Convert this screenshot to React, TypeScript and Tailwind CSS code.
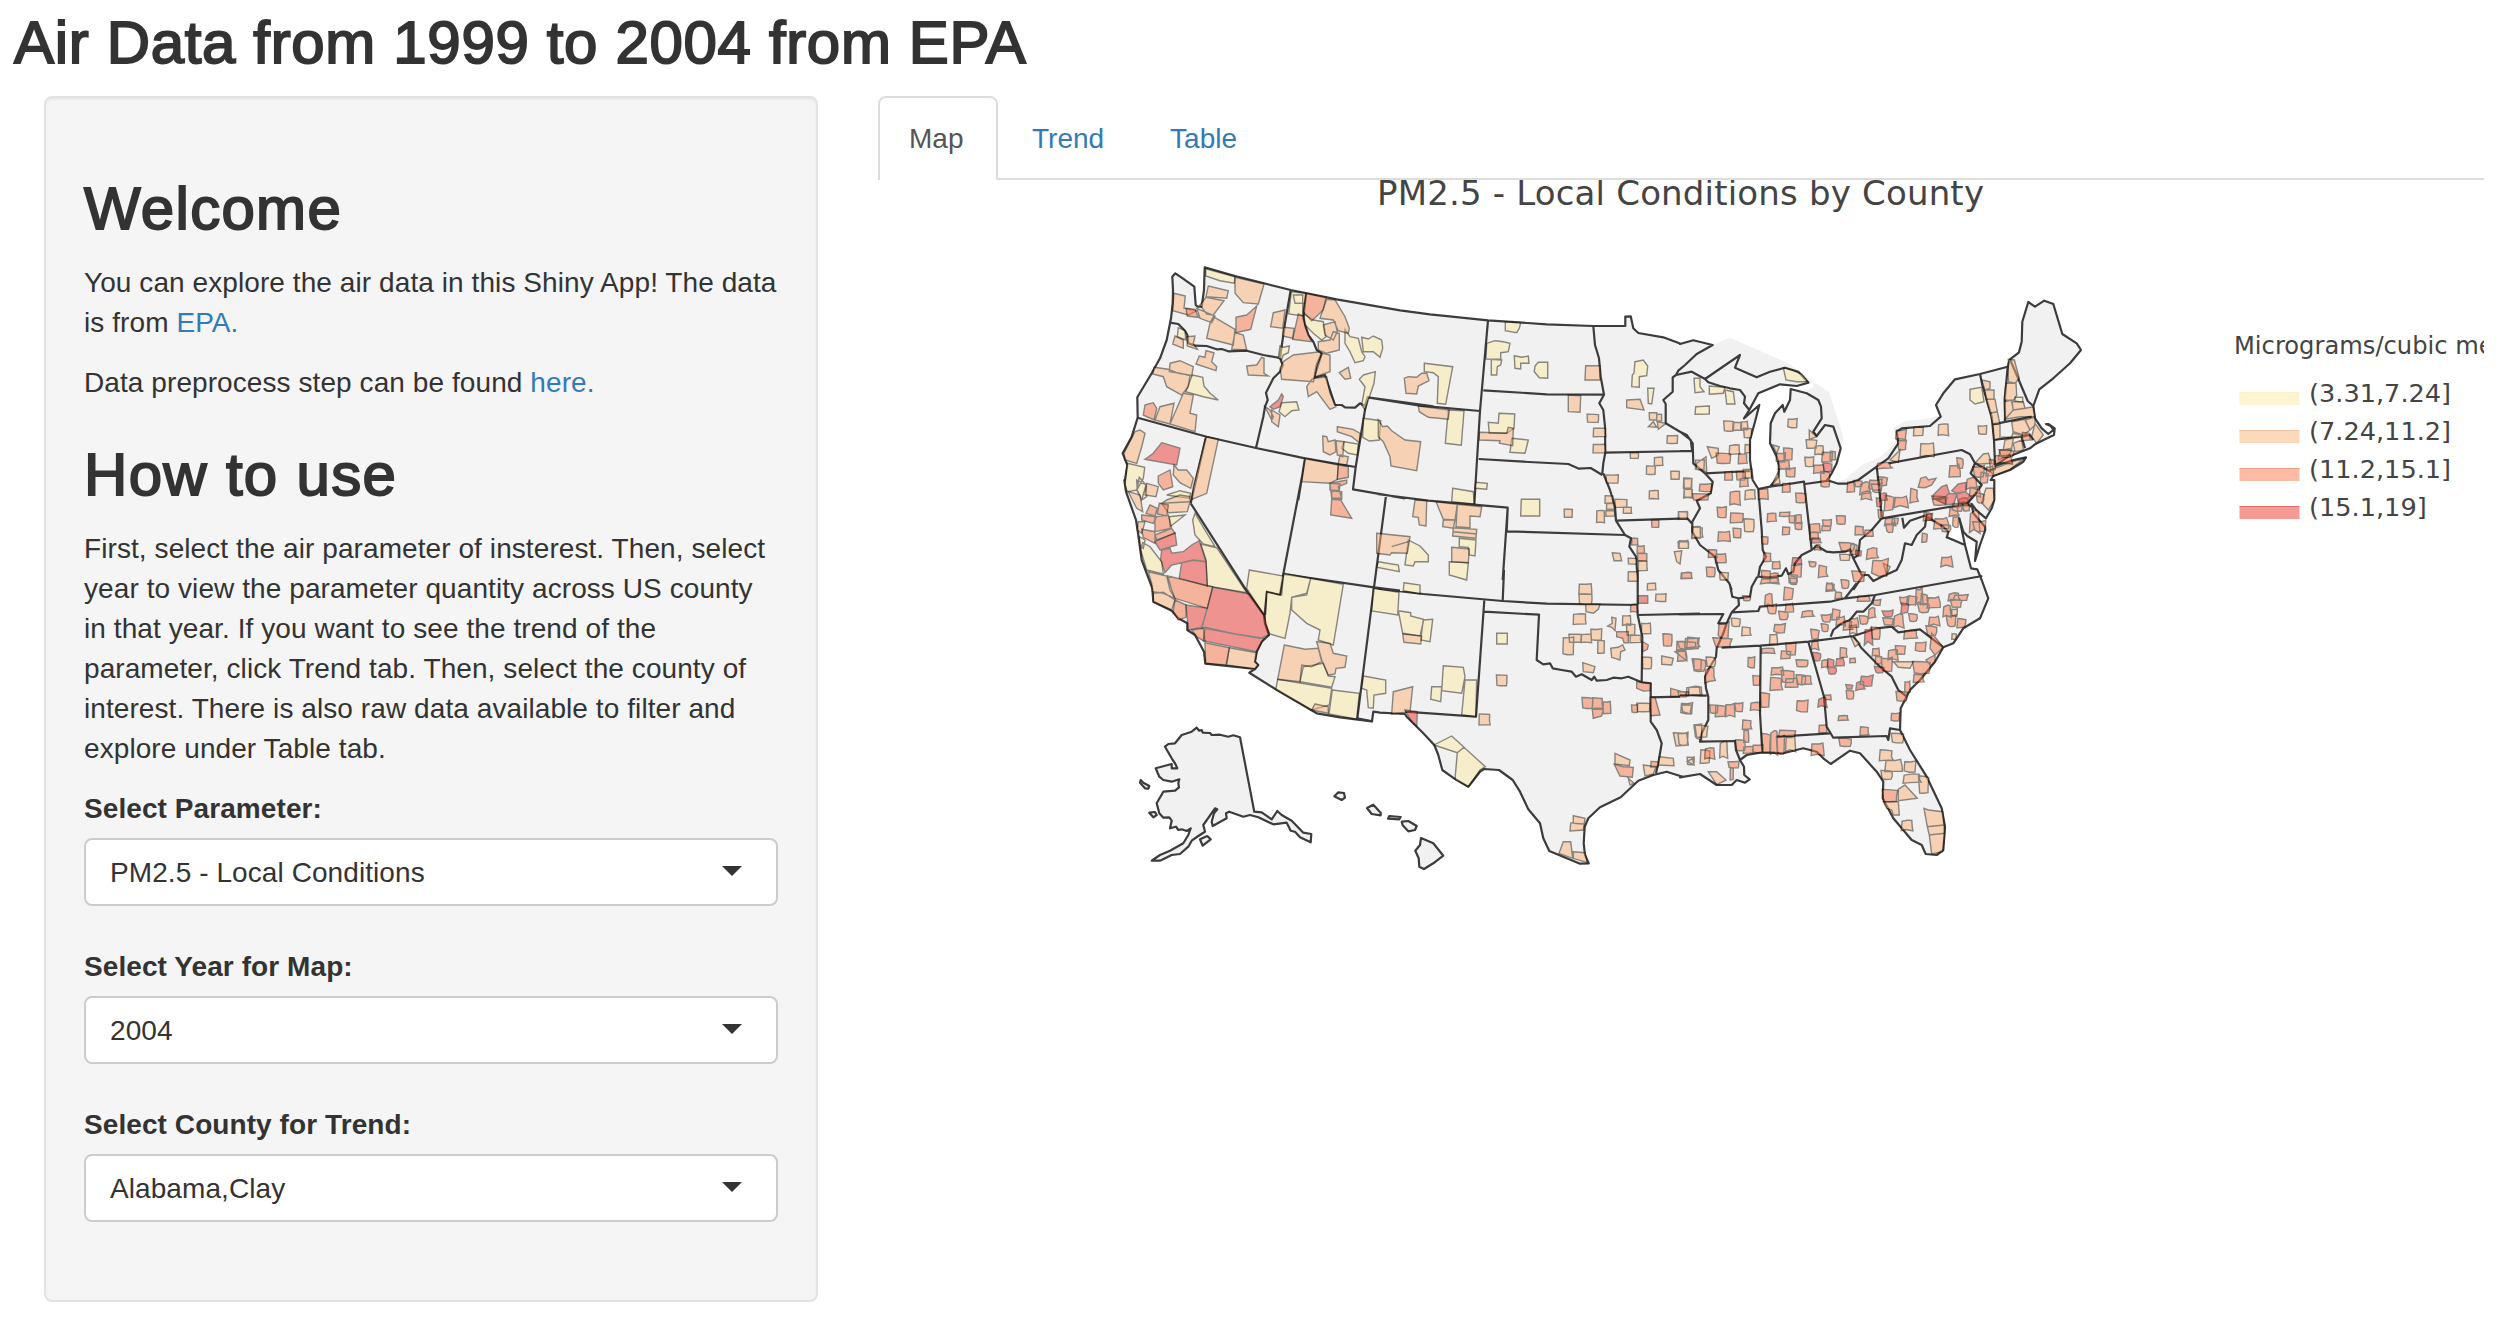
import React from "react";

type Frame = [number, number];

const A: Frame = [1100, 240];
const B: Frame = [1100, 480];
const C: Frame = [1380, 260];
const D: Frame = [1380, 570];
const E: Frame = [1680, 300];
const F: Frame = [1680, 580];
const G: Frame = [1120, 700];

// Each map tile stores coordinates at three times the drawing scale.
function points(frame: Frame, text: string): string {
  return text
    .trim()
    .split(/\s+/)
    .map((p) => {
      const [x, y] = p.split(",").map(Number);
      return `${(frame[0] + x / 3).toFixed(1)},${(frame[1] + y / 3).toFixed(1)}`;
    })
    .join(" ");
}

function shapes(frame: Frame, text: string, close: boolean): string {
  return text
    .split(";")
    .filter((s) => s.trim())
    .map((s) => `M${points(frame, s)}${close ? "Z" : ""}`)
    .join("");
}

// Small counties: x y width height, with corners nudged so they read as irregular outlines.
function blocks(frame: Frame, text: string, rough: number): string {
  return text
    .split(";")
    .filter((s) => s.trim())
    .map((s, i) => {
      const [x, y, w, h] = s.trim().split(/\s+/).map(Number);
      const j = (k: number) => ((((i * 7 + k * 13) % 11) - 5) / 5) * rough;
      const pts = [
        [x + w * j(1), y + h * j(2)],
        [x + w * 0.6, y + h * j(3) * 0.7],
        [x + w + w * j(4), y + h * j(5)],
        [x + w - w * j(6) * 0.7, y + h * 0.6],
        [x + w + w * j(7), y + h + h * j(8)],
        [x + w * 0.4, y + h + h * j(9) * 0.8],
        [x + w * j(10), y + h - h * j(4)],
      ];
      return `M${points(frame, pts.map((p) => p.join(",")).join(" "))}Z`;
    })
    .join("");
}

const land = [
  points(A, "217,110 226,100 248,115 283,140 287,195 293,200 305,200 312,150 314,82 405,108 492,130 572,150 710,178 900,211"),
  points(C, "150,163 324,181 500,193 640,198 736,198 736,170 752,169 760,205 775,219 850,232 902,251"),
  points(E, "0,132 40,121 98,135 150,113 325,190 400,245 447,275 490,410 485,455 447,540 475,545 500,535 545,495 600,472 640,435 655,415 640,385 670,365 750,355 782,345 768,315 790,280 825,238 900,222 983,200 990,178 1017,157 1025,125 1027,65 1045,6 1065,20 1093,2 1120,12 1147,102 1190,130 1203,150 1170,190 1120,235 1078,268 1060,318 1065,355 1085,385 1105,402 1120,390 1098,372 1124,385 1122,405 1095,418 1065,433 1050,445 985,470 955,490 945,498 1000,480 1038,472 1030,485 990,510 940,528 943,540 943,600 918,655 875,612 880,640 915,680 916,690 900,735 885,783 890,725 862,708 850,695 838,655 810,680 800,715 855,735 873,805 892,808 905,840"),
  points(F, "925,55 900,115 850,145 820,190 790,202 765,245 720,300 690,330 662,385 660,450 690,510 740,590 785,685 795,740 790,810 770,825 737,822 725,795 695,780 640,715 608,655 610,605 590,575 540,520 510,512 452,552 430,535 410,515 370,505 310,520 245,517 200,525 180,540 192,560 193,585 209,598 195,608 170,600 155,615 110,615 60,582 0,592"),
  points(D, "910,621 860,605 820,615 775,632 722,682 660,712 625,745 614,770 611,820 615,855 626,880 600,881 508,843 490,805 480,760 445,718 420,665 398,630 357,600 312,597 300,605 265,650 222,625 187,600 175,555 163,525 130,490 80,440 75,432 0,428"),
  points(B, "820,695 816,724 720,712 650,700 527,628 448,578 465,567 316,551 312,515 285,465 262,450 262,430 235,415 215,392 160,365 157,325 125,240 115,165 108,120 78,35 73,0"),
  points(A, "75,720 82,675 68,640 95,590 113,533 112,472 155,400 180,355 200,300 213,235 218,190 219,150"),
].join(" ");

const coast = [
  "M" + [
    points(E, "447,542 475,551 500,551 535,540 590,500 625,475 655,430 650,395 665,385 750,378 782,350 768,315 790,280 825,238 900,222 983,200 990,178 1017,157 1025,125 1027,65 1045,6 1065,20 1093,2 1120,12 1147,102 1190,130 1203,150 1170,190 1120,235 1078,268 1060,318 1065,355 1085,385 1105,402 1120,390 1112,378 1098,372 1105,372 1124,385 1122,405 1095,418 1065,433 1050,445 985,470 955,490 945,498 1000,480 1038,472 1030,485 990,510 940,528 932,540 943,540 943,600 935,625 918,655 890,632 875,612 880,640 915,680 916,690 900,735 885,783 890,725 862,708 850,695 838,655 855,735 815,718 800,712 855,735 873,805 892,808 905,840"),
    points(F, "925,55 900,115 850,145 820,190 790,202 765,245 720,300 690,330 662,385 660,450 690,510 740,590 785,685 795,740 790,810 770,825 737,822 725,795 695,780 640,715 608,655 610,605 590,575 540,520 510,512 452,552 430,535 410,515 370,505 310,520 245,517 200,525 180,540 192,560 193,585 209,598 195,608 170,600 155,615 110,615 60,582 0,592"),
    points(D, "910,621 860,605 820,615 775,632 722,682 660,712 625,745 614,770 611,820 615,855 626,880 600,881 508,843 490,805 480,760 445,718 420,665 398,630 357,600 312,597 300,605 265,650 222,625 187,600 175,555 163,525 130,490 80,440 75,432 0,428"),
    points(B, "820,695 816,724 720,712 650,700 527,628 448,578 465,567 316,551 312,515 285,465 262,450 262,430 235,415 215,392 160,365 157,325 125,240 115,165 108,120 78,35 73,0"),
    points(A, "75,720 82,675 68,640 95,590 113,533 112,472 155,400 180,355 200,300 213,235 218,190 219,150 217,110 226,100 248,115 283,140 287,195 293,200 305,200 312,150 314,82 405,108 492,130 572,150 710,178 900,211"),
    points(C, "150,163 324,181 500,193 640,198 736,198 736,170 752,169 760,205 775,219 850,232 902,251"),
    points(E, "0,132 40,121 98,135 50,162 15,195 -5,212"),
    points(C, "888,345"),
  ].join(" "),
].join("");

const borders = [
  shapes(A, "210,248 235,252 255,272 262,285 265,310 285,317 320,318 350,328 365,327 385,334 440,332 490,345 540,354;572,150 555,250 540,354 548,375 540,395 520,415 498,458 503,480 495,500 490,530 468,624;113,533 320,590 468,624 615,655 767,681;318,590 272,790;618,158 610,235 625,285 640,305 650,330 665,340 650,375 643,413 675,405 690,450 705,495 725,495 735,502 765,503 780,490 795,498 803,472;1000,499 803,472 795,510 767,681 759,748 915,775;615,655 595,780", false),
  shapes(B, "272,70 445,340 492,405 495,430 507,465 485,485 470,515 465,545 475,555 465,567;858,47 822,322;605,-5 550,282 822,322 900,332;822,322 772,715 816,724;550,282 540,345 520,340 500,335 495,405", false),
  shapes(C, "324,181 300,453;-37,412 120,437 300,453;300,453 283,732;296,597 430,605 565,612 597,626 632,624 667,645;310,391 500,403 670,404;640,198 645,255 657,295 662,350 672,404 658,430 670,450 675,500 676,578 670,610 667,640;-10,702 145,722 383,743 380,814 735,825;383,743 368,960;670,640 690,690 705,740 708,782 735,825 753,835 748,860 768,890 773,960;672,578 936,573;708,782 922,775 935,790;888,345 878,352 878,395 850,420 857,432 857,490 900,515 932,540 937,575;888,345 935,335 975,357", false),
  shapes(E, "0,453 38,453;0,395 20,405 38,430 40,490 75,520 98,545 92,580 50,602 60,625 37,665 37,695 60,735 105,770 115,810 148,850 155,870;75,520 213,513;75,237 85,247 120,258 150,265 180,270 195,290 192,310 208,330;75,237 180,165 165,203 230,232 270,215 315,203 355,215 385,248 350,258 300,253 235,280 208,330 192,355 238,315 225,365 210,420 210,480 218,540 235,567 270,560 295,530 298,500 290,470 270,430 272,370 285,340 308,315 313,335 330,300 332,267 380,280 415,300 423,320 425,355 400,395 410,408 435,375 460,380 482,445 470,490 455,520 440,542;270,560 372,545 395,750;375,552 447,542;235,567 245,690 248,750 258,770 240,800 235,830 270,832 305,827 318,805 325,822 340,815 345,790 365,765 395,750 410,737 440,755 460,757 495,755 510,748 520,775 535,765 540,720 575,690 605,655 860,612;590,500 600,590 605,655;625,490 845,450 870,463 885,490 872,520 905,555 880,590 860,612 875,620;885,490 932,515;900,222 907,255 935,350 942,420 945,495;942,420 1050,405 1060,420;938,373 1055,350;990,178 1043,303 1060,318;983,200 975,290 975,365;1025,410 1035,445;667,653 672,683 690,662 740,645 735,680 710,705 695,735 675,730 665,780 650,810 610,828 580,843 565,825 545,825 530,795 520,775;740,650 765,665 790,680 805,695 800,715;550,825 520,870", false),
  shapes(F, "907,-12 585,45 495,55 450,65 240,80 235,93 155,97;585,45 575,70 550,95 530,95 510,120 485,130 460,150 452,170;125,203 240,197 385,185 520,168;520,168 560,155 590,145 635,140 655,157 720,148 790,202;520,168 545,205 600,260 635,290 655,330 680,350;385,185 432,350 440,440 460,473 620,468 625,480 630,445 660,450;290,470 450,460;242,197 240,400 247,517;155,97 140,130 130,160 110,205 108,230 90,260 75,290 78,325 85,350 85,420 65,460 60,485 165,483 168,510 180,540;0,345 80,347;-2,103 130,102 115,130 140,130;150,15 157,50 175,55 177,75 155,97;175,55 210,50 215,20 232,-10;530,10 495,55", false),
  shapes(D, "-20,52 0,57 130,72 368,93 500,101 772,105;313,92 288,440 75,425;313,125 477,134 470,270 490,283 510,280 518,295 545,300 575,305 588,320 605,313 635,330 643,320 650,332 680,330 700,323 725,325 745,320 785,337;772,105 773,135 787,200 785,337 812,340 812,455 830,480 845,520 835,580 828,610;773,135 960,131;372,0 368,93;773,0 773,105;812,382 900,380", false),
].join("");

const yellow = [
  shapes(A, "317,86 405,110 403,130 360,122 317,108;574,155 619,160 615,190 585,190 580,165 608,165 608,228 566,222;235,263 255,272 257,300 232,290;277,405 308,412 312,438 330,460 355,480 310,470 257,455;535,355 540,318 550,322 568,318 565,338 550,345 545,358;612,222 640,240 670,245 678,290 665,300 640,280 615,255;735,268 750,290 775,295 785,335 795,350 790,362 765,368 750,335 735,310;785,292 805,297 820,288 845,300 848,325 840,352 820,335 790,335;790,405 826,395 822,430 795,510 785,495 795,440 778,418;545,488 590,485 597,510 575,512 555,530 537,515;790,535 842,542 838,600 808,603 788,592;732,605 775,612 772,645 745,640 725,625;82,670 134,682 130,715 110,750 82,755 75,735;110,750 118,712 138,735 140,770 125,780;200,765 240,752 272,760 268,775 235,770", true),
  shapes(B, "285,100 345,200 310,192 285,165 278,120;302,192 350,203 440,338 322,318 318,240;448,270 550,288 545,345 500,335 492,405 440,325;552,280 632,295 620,345 575,352 570,400 555,475 510,462 495,430 500,335 540,345;632,295 730,313 700,495 655,480 660,450 620,430 575,390 575,352 620,340;533,598 695,625 688,675 635,690 527,628;697,630 778,640 770,718 687,702;610,560 670,550 685,588 705,590 695,622 600,605;790,588 857,600 857,640 822,645 820,685 805,683 800,630 785,625;835,245 895,255 898,275 830,262;820,325 897,337 893,405 815,393;128,188 150,200 185,245 190,282 140,270 122,210;118,170 135,180 130,205 120,195;110,0 138,15 125,60 112,30;208,110 255,105 210,140", true),
  shapes(C, "376,185 422,188 418,205 410,218 376,212;320,250 345,242 370,245 390,250 385,275 362,278 362,298 318,297;334,298 365,300 362,315 352,320 350,345 334,345;403,287 425,292 445,288 447,310 422,310 422,327 405,325;465,318 475,307 503,307 503,355 478,353 463,335;133,310 218,320 197,433 172,430 175,350 160,338 133,335;205,450 252,452 244,556 196,550;357,460 404,462 402,505 380,520 328,520 325,487 355,490;395,535 445,540 435,580 390,577;287,667 322,670 320,688 285,685;218,685 280,695 283,732 215,725;424,718 479,718 479,768 422,768;238,835 288,840 285,888 268,885 265,862 238,860;208,905 265,908 260,960 208,945;85,840 120,858 145,885 145,905 105,905 100,918 75,915;765,305 790,300 803,318 800,347 778,350 778,382 755,380 757,345 762,340;803,385 822,385 815,432 805,430", true),
  shapes(D, "55,122 92,128 92,138 130,148 130,155 120,198 68,190;130,150 158,148 150,215 122,210;72,38 120,45 120,72 70,62;350,190 382,190 382,222 350,222;190,287 250,292 255,320 245,370 185,362;155,350 185,350 182,395 152,388;255,330 290,330 287,440 245,435;162,525 215,498 252,532 232,548;232,548 252,532 316,590 300,600 265,650 225,628", true),
  shapes(E, "42,235 60,235 60,260 72,275 45,278;88,258 135,262 130,280 88,283;135,270 160,275 165,312 140,312;47,320 88,318 88,342 45,343;310,203 340,212 365,222 385,245 350,245 318,240;870,268 905,262 912,305 885,312 870,300;1005,292 1028,292 1028,308 1005,303", true),
].join("");

const orange = [
  shapes(A, "405,112 492,132 475,192 430,188 405,160;222,160 256,168 252,205 290,212 265,225 218,212;325,138 385,152 380,175 318,170;318,172 372,182 340,225 320,222 300,195;290,205 345,228 335,248 300,235;340,230 405,268 400,315 320,295 330,250;405,278 430,285 440,330 395,328;225,288 250,300 250,325 218,312;260,290 285,288 280,310 292,328 262,318;318,332 342,338 335,365 350,380 348,392 288,372 298,348 315,352;210,370 240,362 280,380 275,408 240,400 208,395;162,382 205,388 235,400 270,405 265,440 245,465 200,440 190,410 158,402;250,460 280,465 270,520 290,525 285,575 210,552;210,552 165,540 180,500 222,490;440,378 470,375 485,352 492,355 492,400 505,408 445,405;520,218 555,210 548,265 512,260;550,262 582,265 578,295 548,288;550,365 580,345 660,335 665,345 640,425 545,418 540,385;635,418 645,415 680,410 690,460 708,500 690,508 650,455 625,470 620,440;665,340 690,345 690,395 645,410 650,385;680,178 705,180 735,230 748,265 745,280 715,272 700,240 660,235 670,205;670,255 705,245 712,275 700,300 675,285;655,305 690,300 700,275 718,280 718,330 680,340 655,330;718,398 745,382 752,415 735,418;495,500 510,510 520,530 515,540;515,510 540,525 535,560 515,545;712,560 760,568 780,580 778,608 755,590 712,575;668,588 680,590 685,605 705,600 708,635 690,645 670,635;708,602 732,605 728,650 712,645;615,655 715,675 712,718 690,730 605,725;720,645 745,650 740,675 715,672;105,575 120,570 135,580 125,620 110,670 75,660 72,640;318,590 355,598 320,760 275,778 280,740;222,675 235,690 260,690 280,715 272,745 240,728 220,705", true),
  shapes(B, "85,35 120,45 128,95 110,85;140,10 175,20 168,50 135,45;185,70 270,65 262,95 205,98;200,60 240,45 270,50 270,65 185,70;145,275 200,288 210,330 225,355 190,340 157,335 155,310;160,340 190,337 225,360 215,390 160,365;388,503 470,518 465,545 475,555 465,567 380,555;553,495 615,508 655,505 665,545 635,560 605,555 600,605 533,598;650,485 690,490 700,520 740,528 735,562 708,565 705,582 685,585 665,540;645,672 685,680 685,700 635,690;115,125 135,125 125,160 112,150", true),
  shapes(C, "-5,480 8,500 22,498 35,512 75,540 122,545 110,632 33,618 30,590 10,545 -5,530;73,355 85,350 110,352 125,340 140,340 147,362 115,378 110,402 78,400;115,438 208,450 205,478 145,472 118,455;617,317 660,317 660,360 615,360;565,405 602,407 600,457 565,455;740,420 780,418 792,450 740,443;832,485 858,490 835,508;805,500 820,485 830,502;298,517 380,520 385,502 400,505 398,557 358,550 360,542 298,540;105,720 140,722 138,798 118,795 115,772 98,770;168,725 232,733 225,780 190,778;232,733 305,740 300,770 270,768 270,803 228,800;190,780 225,780 220,805 188,800;220,803 290,808 288,835 218,828;220,815 290,822;215,862 268,867 265,908 215,905;-10,820 90,830 82,880 35,878 30,885 -10,880;35,860 85,845;883,875 905,872 900,912 890,905;697,878 720,880 725,902 702,902", true),
  blocks(C, "622 463 33 24;640 505 37 25;640 553 36 25;808 458 22 22;830 463 15 20;862 527 30 23;553 748 24 24;650 752 23 35;678 645 36 24;675 708 24 22;680 730 22 18;705 718 35 24;730 742 24 18;678 752 26 16;751 578 24 17;823 592 25 25;800 618 25 25;873 634 25 24;808 692 27 24;912 656 23 29;912 688 25 24;895 755 27 23;745 895 25 17;775 903 26 29;745 935 28 28;895 845 30 20;935 800 26 35;947 600 25 28", 0.03),
  shapes(D, "68,192 125,198 122,222 72,217;40,365 98,350 90,425 35,432;617,103 660,103 655,118 640,130 618,125;695,142 708,145 705,182 695,172 683,168 697,160;692,235 715,232 728,225 735,240 722,245 720,270 695,262;608,278 645,290 640,308 610,305;845,258 880,265 875,285 845,283;705,550 750,570 748,587 705,582;745,625 762,640 750,645;790,585 828,590 820,612 795,618;838,560 880,565 882,587 835,585;880,488 920,490 925,525 888,528;580,737 615,745 610,780 570,783 572,760 580,757;580,760 612,762;550,815 572,815 578,865 537,850;580,845 615,848 622,878 580,865;905,405 935,405 930,432 908,425;945,465 965,462 965,510 950,505", true),
  blocks(D, "350 315 30 32;297 433 32 32;598 42 37 30;598 72 37 30;580 132 37 31;550 203 30 50;568 193 36 24;604 193 30 24;633 178 31 32;653 212 20 38;728 137 24 28;740 162 24 34;750 196 32 22;785 160 27 30;788 262 26 34;802 40 25 20;828 72 29 22;772 400 38 25;920 352 45 24;922 562 20 22", 0.04),
  shapes(E, "82,440 115,445 115,465 95,475;50,490 78,470 80,515 48,508;388,390 410,410 388,418;278,435 298,440 290,460;275,555 295,515 300,550;630,480 660,450 655,487;905,240 930,245 930,265 915,270;915,270 942,270 942,298 918,298;918,298 945,298 952,335 930,340;930,340 952,335 960,373 938,373;938,373 960,373 960,415 942,420;985,178 1003,180 1018,235 1005,250 985,245;978,250 1008,250 1010,285 1000,302 972,300;972,305 995,300 1000,330 975,358;995,305 1030,305 1035,325 1000,330;1000,330 1035,325 1060,320 1065,350 1020,350 975,358;995,365 1035,358 1050,390 1030,405 1000,400;1035,360 1065,352 1065,375 1050,390;965,412 995,412 1000,395 1030,405 1045,405 1035,410 965,418;1065,370 1090,405 1070,430 1055,410;975,420 1000,415 995,445 970,450;1000,430 1025,420 1030,450 1005,455;960,450 995,450 985,468 955,480;885,490 910,462 925,460 935,490 900,492;910,590 918,565 940,565 943,600 925,630 905,608;940,528 930,510 1000,485 1038,472 990,508;985,485 1030,478;610,790 630,800 620,825", true),
  blocks(E, "132 363 28 30;158 368 27 23;183 365 20 23;192 385 22 28;148 435 30 28;325 357 25 25;380 420 30 25;405 438 25 25;375 472 25 27;10 535 25 30;12 565 24 28;-4 635 26 22;37 683 30 30;-2 722 27 22;193 657 28 38;195 570 30 28;190 508 24 25;120 818 25 22;775 373 30 32;895 378 24 24;700 382 30 25;722 430 40 38;480 763 28 18;195 435 14 24", 0.06),
  shapes(F, "85,575 110,575 138,600 110,614;655,628 675,615 712,655 655,662;610,665 655,665 658,705 640,705 635,690 620,685;732,685 745,690 788,695 792,735 742,740;742,740 792,735 794,760 748,765;748,765 794,760 788,815 755,822;640,245 700,245 690,265 655,262;510,165 540,190 525,200;22,545 38,535 42,555", true),
  blocks(F, "155 115 24 24;185 143 26 24;270 163 22 28;80 232 25 28;25 320 35 26;5 370 30 30;45 437 38 35;120 487 22 44;-5 460 27 35;60 512 30 38;318 470 28 42;635 460 34 28;598 512 38 30;618 540 48 32;605 572 30 26;670 583 50 26;675 545 30 30;718 590 28 50;665 722 32 28;815 88 16 20;815 162 14 16;510 135 20 25", 0.09),
].join("");

const salmon = [
  shapes(A, "618,160 678,172 670,210 635,242 610,215;408,232 440,225 470,198 452,268 408,278;258,205 285,208 295,232 262,228;595,222 610,228 615,260 635,305 578,298;135,495 160,488 170,505 162,540 130,525;175,708 210,690 218,740 190,750 175,730;715,675 745,680 745,712 712,718;690,730 740,720 740,730 715,740 725,775 695,775", true),
  shapes(B, "178,70 205,75 200,108 172,102;150,75 172,85 165,108 138,100;125,105 170,110 160,130 125,120;165,110 205,105 215,145 165,155;125,148 165,155 165,190 130,172;165,165 215,145 225,160 170,180;203,288 338,320 322,385 225,355 215,330;225,360 258,375 258,412 235,420 220,395;275,450 310,445 315,485 290,470;315,488 388,503 378,555 317,550;690,10 720,12 718,32 690,30;695,32 725,35 725,58 695,58;695,58 722,60 740,90 755,115 692,105", true),
  blocks(C, "815 780 21 22;755 835 18 20;772 858 21 22;773 880 27 23;903 938 32 17", 0.04),
  shapes(D, "637,418 670,418 665,438 640,445;770,335 812,340 810,362 790,363 770,355;810,382 825,382 840,435 812,437;885,245 915,240 920,272;710,185 745,185 745,218 732,218 728,205 710,200;787,215 805,225 802,238 788,245;872,355 918,368 918,380 872,380;703,583 730,590 760,592 757,622 720,618", true),
  blocks(D, "607 383 30 32;637 385 30 30;670 395 22 34;850 192 25 36;890 215 25 25;917 205 38 30;942 268 22 32;752 103 20 22;755 405 17 22;812 575 23 16", 0.06),
  blocks(E, "110 460 40 30;175 463 25 28;135 515 22 24;170 515 25 25;180 535 24 25;60 552 34 22;40 582 46 18;150 575 30 38;112 622 26 30;150 640 40 28;115 695 35 28;160 685 22 28;85 750 25 22;108 762 30 25;80 802 24 28;5 818 30 18;290 460 25 25;312 445 25 35;295 482 33 25;318 505 26 25;425 458 32 28;402 495 30 24;422 515 26 45;450 455 16 25;308 550 22 25;348 580 28 28;262 640 26 25;300 637 28 12;328 648 20 20;344 645 20 25;345 668 20 20;307 682 22 22;236 567 28 30;245 710 18 22;250 760 22 25;278 785 22 20;245 812 25 25;270 820 25 28;335 795 28 35;327 825 24 24;390 672 30 25;428 660 25 18;425 678 27 14;390 697 25 20;470 647 25 25;525 680 25 25;555 690 24 18", 0.06),
  blocks(E, "480 728 40 25;510 735 22 30;503 545 20 28;525 542 20 18;540 548 30 35;570 540 32 28;598 532 24 25;545 575 28 22;575 552 28 24;612 590 30 42;645 590 38 30;595 630 14 26;690 570 22 38;810 495 30 32;832 475 16 30;590 488 42 18;650 390 26 30;655 418 24 32;860 535 30 30;880 500 30 30;900 520 25 30;870 560 30 28;890 580 20 28;730 640 25 22;765 655 40 28;785 675 25 20;808 622 26 26;820 650 14 30;850 608 20 25;870 635 28 58;880 665 34 28;725 702 17 25;785 770 32 28;388 785 18 15;415 800 25 32;440 850 18 18;485 840 20 25;560 745 32 32;580 780 40 45;520 815 35 30;615 655 30 20;618 672 20 24;635 655 20 18;945 465 50 25;960 450 38 22;1025 400 25 22;920 500 20 25;930 480 16 30;835 595 30 25;820 610 25 22;760 590 40 26;405 735 16 14", 0.13),
  shapes(E, "715,562 722,535 738,530 745,540 768,535 755,555 735,563", true),
  blocks(F, "-5 185 48 22;20 175 35 28;-5 212 25 28;40 238 34 36;75 265 28 42;118 130 26 42;105 175 50 26;255 43 22 32;262 75 25 25;310 25 30 35;245 -6 50 16;330 -5 20 18;438 12 25 22;318 72 22 22;298 95 24 24;365 93 34 18;285 133 28 24;395 150 22 28;395 185 20 22;425 105 25 20;455 90 25 30;470 110 25 25;425 132 18 22;490 125 25 25;510 115 25 24;540 108 22 24;565 85 20 30;582 60 18 15;612 115 28 20;642 105 28 35;660 52 20 22;683 50 28 25;708 25 20 45;715 72 30 25;722 45 20 28;745 52 35 28;688 102 22 22;805 40 32 22;825 45 35 15;815 60 30 22;790 78 22 30;800 108 25 30;830 118 28 25;748 110 30 25;740 138 28 28;465 38 20 18;535 48 34 14;190 48 20 14", 0.13),
  shapes(F, "755,160 790,202 765,225 750,205;765,225 765,245 752,258 738,240", true),
  blocks(F, "700 245 48 35;700 285 30 22;675 305 15 30;650 335 30 28;672 152 38 24;708 188 28 25;648 198 28 25;625 210 28 28;605 235 30 38;585 230 20 22;578 205 20 22;575 142 24 35;480 205 20 28;510 235 16 12;350 240 32 20;425 240 18 22;205 232 18 30;220 288 20 28;245 205 38 14;318 190 28 34;302 214 30 22;275 262 35 22;305 272 35 35;270 295 35 36;318 295 35 25;350 285 25 28;365 288 28 26;352 362 30 32;243 340 25 42;212 368 28 22;165 370 22 24;105 378 32 32;138 372 26 36;90 375 22 24;187 422 26 26;192 450 14 35;168 480 26 32;190 500 30 20;220 495 28 22;247 463 24 55;272 455 20 65;290 470 22 50;295 452 52 18;395 490 36 35;478 475 34 24;540 442 25 24;418 435 22 22;500 332 20 25;475 407 28 14;635 400 22 22;610 630 42 35;75 505 28 30;145 545 30 18;150 565 10 35;435 345 18 14;-5 335 30 12", 0.08),
].join("");

const red = [
  shapes(A, "185,608 240,625 230,675 135,658 160,640;510,500 535,480 545,462 550,470 540,500 520,508", true),
  shapes(B, "165,185 225,158 230,195 180,210;185,210 210,205 215,220 250,215 275,195 298,182 318,245 280,240 245,248 215,255 195,278 182,238;245,248 280,241 318,245 322,318 238,295;338,322 448,342 492,405 507,465 480,475 405,462 315,442 305,445 322,385;258,375 322,385 305,442 265,450 262,415;315,445 405,462 492,475 470,515 310,482", true),
  shapes(D, "775,77 803,77 803,100 775,100;75,420 112,425 110,468 95,455", true),
  shapes(E, "760,585 785,560 800,555 808,580 795,590 760,598;815,572 835,552 858,548 858,575 830,580;795,590 808,580 830,582 822,612 800,614;830,582 855,575 875,590 862,610 835,610;770,600 795,595 800,614", true),
  blocks(E, "430 490 24 24;395 715 26 14;338 772 26 18;590 595 14 25;600 580 20 22;740 642 16 18;528 752 16 16", 0.1),
  blocks(F, "400 218 20 24;442 240 20 24;470 235 22 20;445 262 22 20;528 305 24 25;545 288 30 28;500 315 18 12;415 355 24 24;608 93 28 16;662 72 24 28;555 145 22 45;585 260 24 18", 0.15),
].join("");

const alaska = shapes(
  G,
  "230,83 238,92 245,90 248,98 270,99 275,105 300,104 325,110 340,106 360,112 403,335 425,337 455,358 472,333 485,345 515,362 550,398 574,402 572,427 540,412 525,395 512,392 500,368 460,373 415,352 390,345 370,350 328,335 318,340 320,355 278,378 275,365 282,340 292,328 285,325 250,375 255,395 235,408 215,422 205,440 180,462 155,465 120,482 95,482 120,465 150,452 190,430 205,405 212,385 200,393 185,388 175,390 168,380 150,385 155,362 148,352 130,353 118,340 110,310 130,275 165,272 177,262 175,250 178,238 155,245 130,240 118,230 107,205 155,192 155,205 172,205 165,190 155,175 135,140 145,132 165,130 185,105 215,95;62,240 60,248 75,265 85,266 88,258 70,248;88,338 105,336 110,345 100,352;240,418 262,408 272,418 248,437",
  true
);

const hawaii = shapes(
  G,
  "643,289 655,277 672,279 675,293 665,300;741,324 760,314 782,338 782,346 755,342;808,348 842,351 838,358 804,356;845,365 865,363 890,378 885,390 865,394 848,376;903,414 940,430 970,467 940,490 912,507 898,500 896,475 886,452 900,435",
  true
);

const water = [
  shapes(E, "300,253 350,258 398,250 400,262 372,275 332,267 330,300 313,335 308,315 285,340 272,370 270,430 290,470 298,500 295,530 270,560 235,567 218,540 210,480 210,420 225,365 238,315 192,355 208,330 235,280", true),
  shapes(E, "838,655 850,695 862,708 890,725 885,783 870,760 855,735 845,700", true),
].join("");

const counties: [string, string][] = [
  [yellow, "#fbeda5"],
  [orange, "#fdb379"],
  [salmon, "#fb774a"],
  [red, "#ed372f"],
];

const legend: [string, string, string][] = [
  ["(3.31,7.24]", "#fdf5d2", "#fbf1c4"],
  ["(7.24,11.2]", "#fdd9bc", "#f3c6a2"],
  ["(11.2,15.1]", "#fbbba4", "#ee9f86"],
  ["(15.1,19]", "#f59b94", "#e0706a"],
];

function CountyMap() {
  return (
    <svg className="block h-[820px] w-[1606px] overflow-hidden" viewBox="878 180 1606 820">
      <text x="1377" y="205" fontSize="34" fill="#444" textLength="607" fontFamily='Verdana, "DejaVu Sans", sans-serif'>
        PM2.5 - Local Conditions by County
      </text>
      <polygon points={land} fill="#f1f1f1" />
      <path d={water} fill="#fff" />
      <g fill="none" stroke="#3c3c3c" strokeWidth="2.2" strokeLinejoin="round">
        <path d={coast} />
        <path d={borders} />
        <path d={alaska} fill="#f1f1f1" />
        <path d={hawaii} fill="#f1f1f1" />
      </g>
      {counties.map(([d, fill]) => (
        <path key={fill} d={d} fill={fill} stroke="#22190e" strokeWidth="1.4" opacity="0.5" />
      ))}
      <g fontFamily='Verdana, "DejaVu Sans", sans-serif' fill="#444">
        <text x="2234" y="354" fontSize="24.2">Micrograms/cubic meter</text>
        {legend.map(([label, fill, edge], i) => (
          <g key={label} fontSize="25.6">
            <rect x="2239.5" y={392 + i * 38} width="60" height="13" fill={fill} />
            <rect x="2239.5" y={392 + i * 38} width="60" height="1" fill={edge} />
            <text x="2309" y={402 + i * 38}>{label}</text>
          </g>
        ))}
      </g>
    </svg>
  );
}

function Heading({ children, className = "" }: { children: React.ReactNode; className?: string }) {
  return (
    <h2 className={`mb-5 text-[60px] leading-[66px] whitespace-nowrap [-webkit-text-stroke:1.9px_#333] ${className}`}>
      {children}
    </h2>
  );
}

function Select({ label, value }: { label: string; value: string }) {
  return (
    <div className="mb-10">
      <div className="mb-2.5 pt-px font-bold leading-[39px]">{label}</div>
      <div className="flex h-[68px] items-center justify-between rounded-lg border-2 border-[#ccc] bg-white pr-[34px] pl-6">
        <span className="pt-px">{value}</span>
        <span className="-mt-0.5 h-0 w-0 border-x-[10px] border-t-[10px] border-x-transparent border-t-[#333]" />
      </div>
    </div>
  );
}

export default function App() {
  return (
    <div className="h-[1328px] w-[2518px] overflow-hidden bg-white pt-2.5 pl-[14px] font-['Helvetica_Neue','Liberation_Sans',Arial,sans-serif] text-[28px] leading-10 text-[#333]">
      <Heading className="tracking-[0.66px]">Air Data from 1999 to 2004 from EPA</Heading>
      <div className="flex items-start pl-[30px]">
        <aside className="h-[1206px] w-[774px] shrink-0 rounded-lg border-2 border-[#e3e3e3] bg-[#f5f5f5] px-[38px] pt-[78px] tracking-[0.08px] shadow-[inset_0_2px_2px_rgba(0,0,0,0.05)]">
          <Heading className="tracking-[1.3px]">Welcome</Heading>
          <p className="relative top-px mb-5 whitespace-nowrap">
            You can explore the air data in this Shiny App! The data
            <br />
            is from <a className="text-[#337ab7]">EPA.</a>
          </p>
          <p className="relative top-px whitespace-nowrap">
            Data preprocess step can be found <a className="text-[#337ab7]">here.</a>
          </p>
          <Heading className="mt-10 tracking-[1.3px]">How to use</Heading>
          <p className="relative top-px mb-5 whitespace-nowrap">
            First, select the air parameter of insterest. Then, select
            <br />
            year to view the parameter quantity across US county
            <br />
            in that year. If you want to see the trend of the
            <br />
            parameter, click Trend tab. Then, select the county of
            <br />
            interest. There is also raw data available to filter and
            <br />
            explore under Table tab.
          </p>
          <Select label="Select Parameter:" value="PM2.5 - Local Conditions" />
          <Select label="Select Year for Map:" value="2004" />
          <Select label="Select County for Trend:" value="Alabama,Clay" />
        </aside>
        <main className="ml-[60px] w-[1606px] shrink-0">
          <nav className="flex">
            <div className="h-[84px] w-[120px] rounded-t-lg border-2 border-b-0 border-[#ddd] pt-[21px] pl-[29px] text-[#555]">Map</div>
            <div className="flex h-[84px] grow border-b-2 border-[#ddd] pt-[23px] text-[#337ab7]">
              <span className="ml-[34px]">Trend</span>
              <span className="ml-[66px]">Table</span>
            </div>
          </nav>
          <CountyMap />
        </main>
      </div>
    </div>
  );
}
